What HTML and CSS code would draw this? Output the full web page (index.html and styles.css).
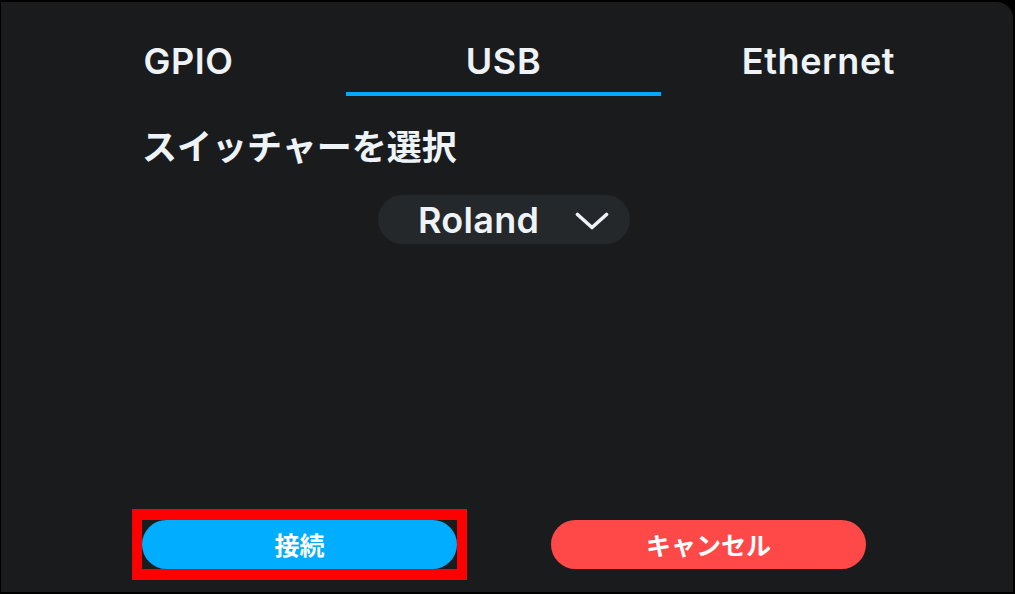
FILE: index.html
```html
<!DOCTYPE html>
<html lang="ja">
<head>
<meta charset="utf-8">
<title>Switcher</title>
<link rel="stylesheet" href="styles.css">
</head>
<body>
<div class="panel">
  <nav class="tabs">
    <div class="tab">GPIO</div>
    <div class="tab active">USB</div>
    <div class="tab">Ethernet</div>
  </nav>
  <main class="content">
    <h1 class="title">スイッチャーを選択</h1>
    <div class="select">
      <span class="select-label">Roland</span>
      <svg class="chevron" width="34" height="18" viewBox="0 0 34 18"><polyline points="2.5,2.5 17,15.5 31.5,2.5" fill="none" stroke="#eef3f8" stroke-width="3.6" stroke-linecap="round" stroke-linejoin="round"/></svg>
    </div>
    <div class="actions">
      <button class="btn btn-connect highlighted">接続</button>
      <button class="btn btn-cancel">キャンセル</button>
    </div>
  </main>
</div>
</body>
</html>
```

FILE: styles.css
```css
* { box-sizing: border-box; }
html, body { height: 100%; }
body {
  margin: 0;
  background: #000;
  font-family: Inter, "Noto Sans CJK JP", sans-serif;
  color: #eef3f8;
}
.panel {
  margin: 2px 2px 2px 1px;
  height: calc(100vh - 4px);
  background: #1a1b1d;
  border-radius: 0 16px 0 0;
  padding: 37px 36px 23px 30px;
  display: flex;
  flex-direction: column;
}
.tabs {
  display: grid;
  grid-template-columns: repeat(3, 315px);
}
.tab {
  text-align: center;
  font-size: 36px;
  font-weight: 600;
  letter-spacing: 0.6px;
  line-height: 44px;
  padding-bottom: 9px;
  border-bottom: 4px solid transparent;
}
.tab.active { border-bottom-color: #00aaf8; }
.content {
  width: 724px;
  margin: 0 auto;
  flex: 1;
  display: flex;
  flex-direction: column;
}
.title {
  margin: 29px 0 0;
  font-family: "Noto Sans CJK JP", sans-serif;
  font-size: 35px;
  font-weight: 700;
  line-height: 40px;
}
.select {
  align-self: center;
  margin-top: 30px;
  width: 252px;
  height: 49px;
  border-radius: 25px;
  background: #25282b;
  display: flex;
  align-items: center;
  padding: 0 21px 0 40px;
}
.select-label {
  font-size: 36px;
  font-weight: 600;
  letter-spacing: 0.3px;
  line-height: 44px;
}
.chevron { margin-left: auto; margin-top: 2px; }
.actions {
  margin-top: auto;
  display: flex;
  justify-content: space-between;
}
.btn {
  width: 315px;
  height: 49px;
  border: 0;
  border-radius: 25px;
  color: #fff;
  font-family: "Noto Sans CJK JP", sans-serif;
  font-size: 25px;
  font-weight: 700;
  line-height: 49px;
  padding: 0;
}
.btn-connect { background: #00adff; }
.btn-cancel { background: #ff4848; }
.highlighted { position: relative; }
.highlighted::after {
  content: "";
  position: absolute;
  top: -11px; bottom: -11px; left: -10px; right: -10px;
  border: 10px solid #ff0000;
  border-top-width: 11px;
  border-bottom-width: 11px;
  pointer-events: none;
}
```
